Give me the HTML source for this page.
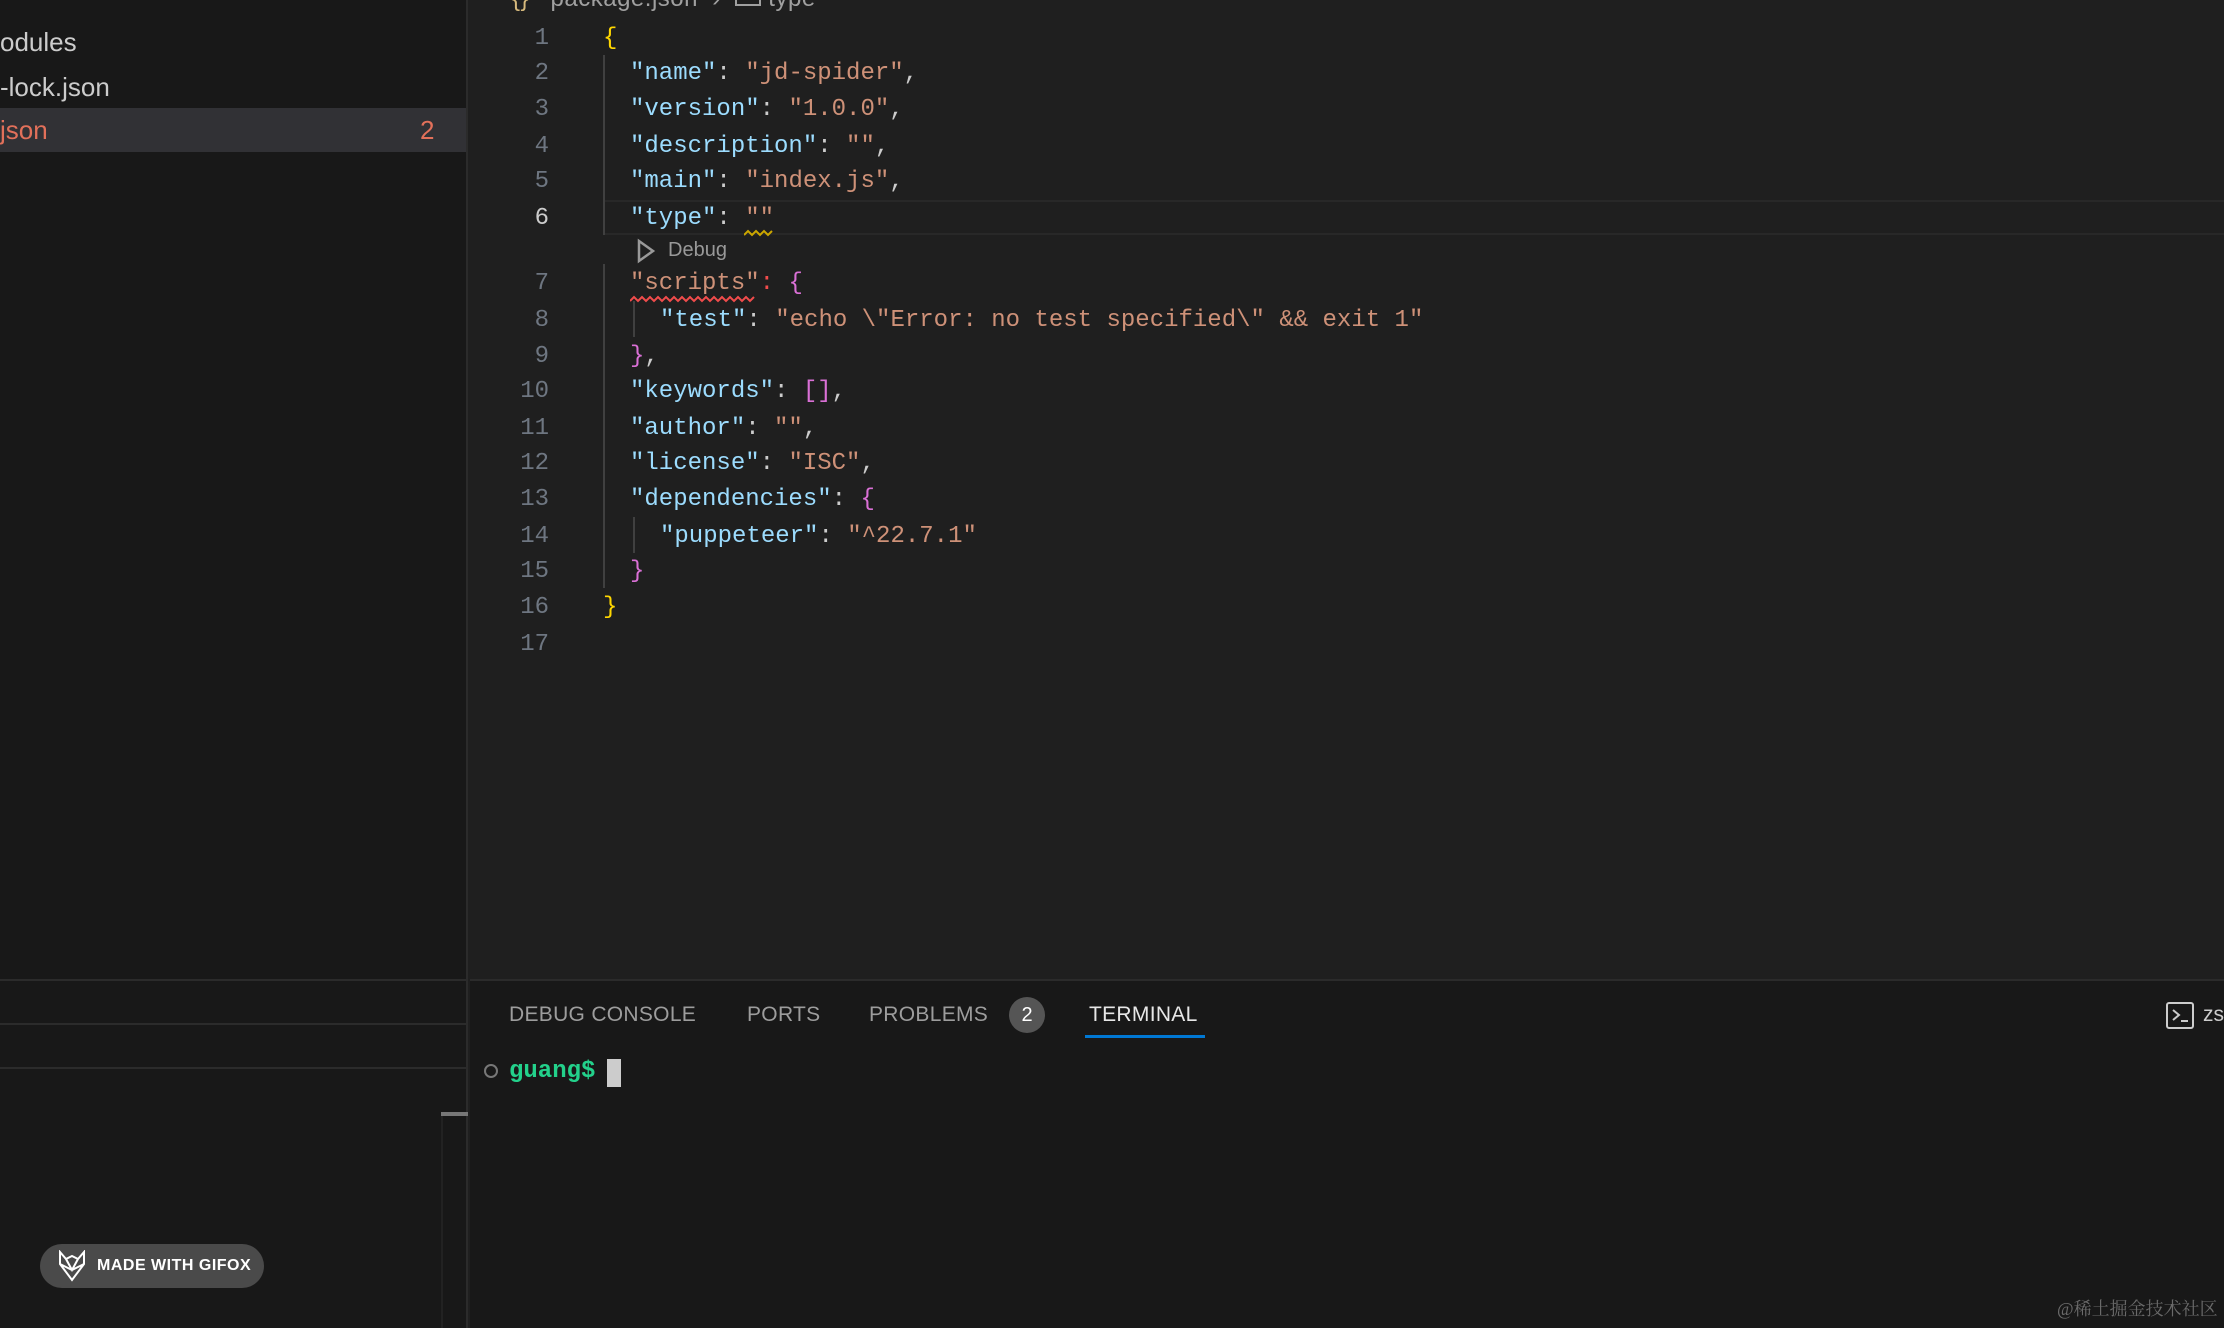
<!DOCTYPE html>
<html><head><meta charset="utf-8">
<style>
*{margin:0;padding:0;box-sizing:border-box}
body{width:2224px;height:1328px;background:#1f1f1f;position:relative;overflow:hidden;font-family:"Liberation Sans",sans-serif}
.abs{position:absolute}
#side{left:0;top:0;width:468px;height:1328px;background:#181818;border-right:2px solid #2b2b2b}
.st{position:absolute;left:0;font-size:26px;color:#cccccc;white-space:nowrap;line-height:44px}
.code{position:absolute;font-family:"Liberation Mono",monospace;font-size:24px;line-height:36px;height:36px;white-space:pre;color:#cccccc}
.ln{position:absolute;left:480px;width:69px;text-align:right;font-family:"Liberation Mono",monospace;font-size:24px;line-height:36px;color:#6e7681}
.k{color:#9cdcfe}.s{color:#ce9178}.y{color:#ffd700}.p{color:#da70d6}.r{color:#f14c4c}
.g{position:absolute;width:2px;background:#404040}
.tab{position:absolute;top:1000px;font-size:21px;color:#9d9d9d;line-height:30px;letter-spacing:0.3px}
.L{margin-top:2px}
</style></head><body>
<div id="side" class="abs">
  <div class="st" style="top:20px">odules</div>
  <div class="st" style="top:65px">-lock.json</div>
  <div class="abs" style="left:0;top:108px;width:466px;height:44px;background:#313135"></div>
  <div class="st" style="top:108px;color:#e2705a">json</div>
  <div class="st" style="top:108px;left:420px;color:#e2705a">2</div>
  <div class="abs" style="left:0;top:979px;width:466px;height:2px;background:#2b2b2b"></div>
  <div class="abs" style="left:0;top:1023px;width:466px;height:2px;background:#2b2b2b"></div>
  <div class="abs" style="left:0;top:1067px;width:466px;height:2px;background:#2b2b2b"></div>
  <div class="abs" style="left:441px;top:1112px;width:27px;height:4px;background:#777"></div>
  <div class="abs" style="left:441px;top:1116px;width:2px;height:212px;background:#222"></div>
  <div class="abs" style="left:40px;top:1244px;width:224px;height:44px;border-radius:22px;background:#4a4a4a"></div>
  <svg class="abs" style="left:57px;top:1250px" width="30" height="32" viewBox="0 0 30 32"><path d="M3 2 L9 9 L15 6 L21 9 L27 2 L27 14 L15 30 L3 14 Z M9 9 L15 20 L21 9 M3 14 L15 20 L27 14" fill="none" stroke="#fff" stroke-width="2"/></svg>
  <div class="abs" style="left:97px;top:1253px;font-size:16px;font-weight:bold;color:#fff;line-height:26px;letter-spacing:0.5px">MADE WITH GIFOX</div>
</div>

<div class="abs" style="left:512px;top:-16px;font-size:24px;color:#a0a0a0;line-height:30px;white-space:nowrap;letter-spacing:0.5px"><span style="color:#d7ba7d">{}</span> &nbsp;&nbsp;package.json &nbsp;› &nbsp;<span style="display:inline-block;width:26px;height:14px;border:2px solid #a0a0a0;vertical-align:0"></span> type</div>

<div class="abs" style="left:603px;top:200px;width:1621px;height:35px;border-top:2px solid #282828;border-bottom:2px solid #282828"></div>

<div class="g" style="left:603px;top:55px;height:180px"></div>
<div class="g" style="left:603px;top:264px;height:324px"></div>
<div class="g" style="left:633px;top:301px;height:36px"></div>
<div class="g" style="left:633px;top:517px;height:36px"></div>

<div class="ln L" style="top:19px">1</div>
<div class="ln L" style="top:54px">2</div>
<div class="ln L" style="top:90px">3</div>
<div class="ln L" style="top:127px">4</div>
<div class="ln L" style="top:162px">5</div>
<div class="ln L" style="top:199px;color:#cccccc">6</div>
<div class="ln L" style="top:264px">7</div>
<div class="ln L" style="top:301px">8</div>
<div class="ln L" style="top:337px">9</div>
<div class="ln L" style="top:372px">10</div>
<div class="ln L" style="top:409px">11</div>
<div class="ln L" style="top:444px">12</div>
<div class="ln L" style="top:480px">13</div>
<div class="ln L" style="top:517px">14</div>
<div class="ln L" style="top:552px">15</div>
<div class="ln L" style="top:588px">16</div>
<div class="ln L" style="top:625px">17</div>

<div class="code L" style="left:603px;top:19px"><span class="y">{</span></div>
<div class="code L" style="left:630px;top:54px"><span class="k">"name"</span>: <span class="s">"jd-spider"</span>,</div>
<div class="code L" style="left:630px;top:90px"><span class="k">"version"</span>: <span class="s">"1.0.0"</span>,</div>
<div class="code L" style="left:630px;top:127px"><span class="k">"description"</span>: <span class="s">""</span>,</div>
<div class="code L" style="left:630px;top:162px"><span class="k">"main"</span>: <span class="s">"index.js"</span>,</div>
<div class="code L" style="left:630px;top:199px"><span class="k">"type"</span>: <span class="s">""</span></div>
<svg class="abs" style="left:744px;top:229px" width="30" height="8"><path d="M0 6 L4 2 L8 6 L12 2 L16 6 L20 2 L24 6 L28 2" fill="none" stroke="#cca700" stroke-width="2"/></svg>
<svg class="abs" style="left:636px;top:238px" width="20" height="26"><path d="M3 3 L17 13 L3 23 Z" fill="none" stroke="#999" stroke-width="2.5"/></svg>
<div class="abs" style="left:668px;top:236px;font-size:20px;color:#999;line-height:28px">Debug</div>
<div class="code L" style="left:630px;top:264px"><span class="s">"scripts"</span><span class="r">:</span> <span class="p">{</span></div>
<svg class="abs" style="left:630px;top:295px" width="130" height="8"><path d="M0 6 L4 2 L8 6 L12 2 L16 6 L20 2 L24 6 L28 2 L32 6 L36 2 L40 6 L44 2 L48 6 L52 2 L56 6 L60 2 L64 6 L68 2 L72 6 L76 2 L80 6 L84 2 L88 6 L92 2 L96 6 L100 2 L104 6 L108 2 L112 6 L116 2 L120 6 L124 2" fill="none" stroke="#f14c4c" stroke-width="2"/></svg>
<div class="code L" style="left:660px;top:301px"><span class="k">"test"</span>: <span class="s">"echo \"Error: no test specified\" &amp;&amp; exit 1"</span></div>
<div class="code L" style="left:630px;top:337px"><span class="p">}</span>,</div>
<div class="code L" style="left:630px;top:372px"><span class="k">"keywords"</span>: <span class="p">[]</span>,</div>
<div class="code L" style="left:630px;top:409px"><span class="k">"author"</span>: <span class="s">""</span>,</div>
<div class="code L" style="left:630px;top:444px"><span class="k">"license"</span>: <span class="s">"ISC"</span>,</div>
<div class="code L" style="left:630px;top:480px"><span class="k">"dependencies"</span>: <span class="p">{</span></div>
<div class="code L" style="left:660px;top:517px"><span class="k">"puppeteer"</span>: <span class="s">"^22.7.1"</span></div>
<div class="code L" style="left:630px;top:552px"><span class="p">}</span></div>
<div class="code L" style="left:603px;top:588px"><span class="y">}</span></div>

<div class="abs" style="left:470px;top:979px;width:1754px;height:349px;background:#181818;border-top:2px solid #2b2b2b"></div>
<div class="tab" style="left:509px">DEBUG CONSOLE</div>
<div class="tab" style="left:747px">PORTS</div>
<div class="tab" style="left:869px">PROBLEMS</div>
<div class="abs" style="left:1009px;top:997px;width:36px;height:36px;border-radius:18px;background:#555;color:#fff;font-size:20px;text-align:center;line-height:36px">2</div>
<div class="tab" style="left:1089px;color:#e7e7e7">TERMINAL</div>
<div class="abs" style="left:1085px;top:1035px;width:120px;height:3px;background:#0078d4"></div>
<div class="abs" style="left:2166px;top:1002px;width:28px;height:27px;border:2px solid #ccc;border-radius:3px"></div>
<svg class="abs" style="left:2170px;top:1007px" width="22" height="18"><path d="M3 3 L9 8 L3 13 M11 14 L18 14" fill="none" stroke="#ccc" stroke-width="2"/></svg>
<div class="abs" style="left:2203px;top:1000px;font-size:21px;color:#ccc;line-height:30px">zs</div>
<div class="abs" style="left:484px;top:1064px;width:14px;height:14px;border:2px solid #777;border-radius:7px"></div>
<div class="abs" style="left:509px;top:1057px;font-family:'Liberation Mono',monospace;font-size:24px;font-weight:bold;color:#23d18b;line-height:30px">guang$</div>
<div class="abs" style="left:607px;top:1059px;width:14px;height:28px;background:#cccccc"></div>
<div class="abs" style="left:2057px;top:1297px;font-family:'Liberation Serif','Noto Serif CJK SC',serif;font-size:18px;color:#6a6a6a;line-height:24px;white-space:nowrap">@稀土掘金技术社区</div>
</body></html>
